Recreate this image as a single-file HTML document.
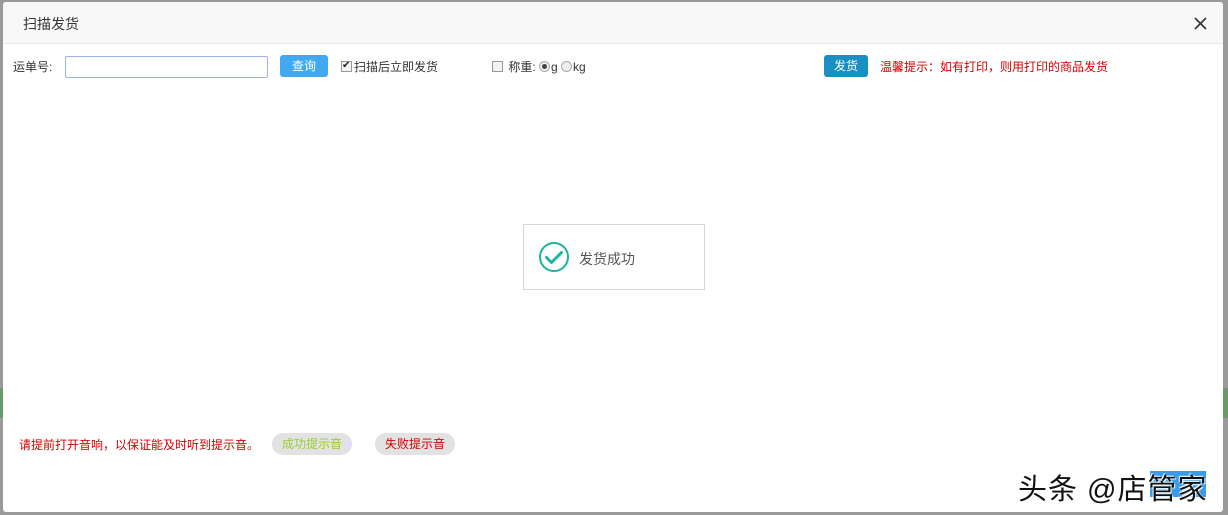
<!DOCTYPE html>
<html><head><meta charset="utf-8"><style>
*{margin:0;padding:0;box-sizing:border-box}
body{width:1228px;height:515px;background:#9a9a9a;font-family:"Liberation Sans","Noto Sans CJK SC","WenQuanYi Zen Hei",sans-serif;position:relative;overflow:hidden;font-size:12px;color:#333}
.dlg{position:absolute;left:3px;top:2px;width:1220px;height:510px;background:#fff;border-radius:3px}
.hd{height:42px;background:#f8f8f8;border-bottom:1px solid #e8e8e8;border-radius:3px 3px 0 0;position:relative}
.hd .t{position:absolute;left:20px;top:12px;font-size:14px;color:#333}
.abs{position:absolute;white-space:nowrap}
.inp{left:62px;top:54px;width:203px;height:22px;border:1px solid #9ab5e6;border-radius:2px;background:#fff}
.btn{color:#fff;border-radius:3px;text-align:center;line-height:22px;height:22px}
.cb{display:inline-block;width:11px;height:11px;border:1px solid #999;background:#f3f3f3;vertical-align:-1px;margin-right:2px;position:relative}
.rd{display:inline-block;width:11px;height:11px;border:1px solid #aaa;border-radius:50%;background:#eee;vertical-align:-1px;margin-right:1px;position:relative}
.red{color:#d40000}
.pill{background:#e2e2e2;border-radius:11px;height:22px;line-height:22px;text-align:center}
.toast{left:520px;top:222px;width:182px;height:66px;border:1px solid #d6d6d6;background:#fff}
</style></head><body>
<div style="position:absolute;left:0;top:388px;width:3px;height:30px;background:#6a9a6a"></div>
<div style="position:absolute;right:0;top:388px;width:5px;height:30px;background:#6a9a6a"></div>
<div class="dlg">
<div class="hd"><span class="t">扫描发货</span>
<svg style="position:absolute;right:16px;top:15px" width="13" height="13" viewBox="0 0 13 13"><path d="M1 1L12 12M12 1L1 12" stroke="#333" stroke-width="1.6"/></svg></div>
<span class="abs" style="left:10px;top:56px">运单号:</span>
<div class="abs inp"></div>
<div class="abs btn" style="left:277px;top:53px;width:48px;background:#42a9f0">查询</div>
<span class="abs" style="left:338px;top:56px"><span class="cb"><span style="position:absolute;left:0;top:-2px;font-size:10px;color:#222">✔</span></span>扫描后立即发货</span>
<span class="abs" style="left:489px;top:56px"><span class="cb"></span> 称重: <span class="rd"><span style="position:absolute;left:2px;top:2px;width:5px;height:5px;border-radius:50%;background:#444"></span></span>g <span class="rd"></span>kg</span>
<div class="abs btn" style="left:821px;top:53px;width:44px;background:#1a8fc2">发货</div>
<span class="abs red" style="left:877px;top:56px">温馨提示：如有打印，则用打印的商品发货</span>
<div class="abs toast">
<svg style="position:absolute;left:14px;top:16px" width="32" height="32" viewBox="0 0 32 32"><circle cx="16" cy="16" r="14" fill="none" stroke="#1fb59a" stroke-width="2"/><path d="M8.5 16.5l5 5 10-10" fill="none" stroke="#1fb59a" stroke-width="3" stroke-linecap="round" stroke-linejoin="round"/></svg>
<span class="abs" style="left:55px;top:24px;font-size:14px;color:#555">发货成功</span>
</div>
<span class="abs red" style="left:16px;top:434px">请提前打开音响，以保证能及时听到提示音。</span>
<div class="abs pill" style="left:269px;top:431px;width:80px;color:#9acd32">成功提示音</div>
<div class="abs pill" style="left:372px;top:431px;width:80px;color:#d40000">失败提示音</div>
<div class="abs" style="left:1147px;top:469px;width:56px;height:26px;background:#3a9be8"></div>
<span class="abs" style="left:1015px;top:464px;font-size:29px;letter-spacing:1px;color:#111;text-shadow:1px 1px 1px #fff,-1px -1px 1px #fff">头条 @店管家</span>
</div>
</body></html>
